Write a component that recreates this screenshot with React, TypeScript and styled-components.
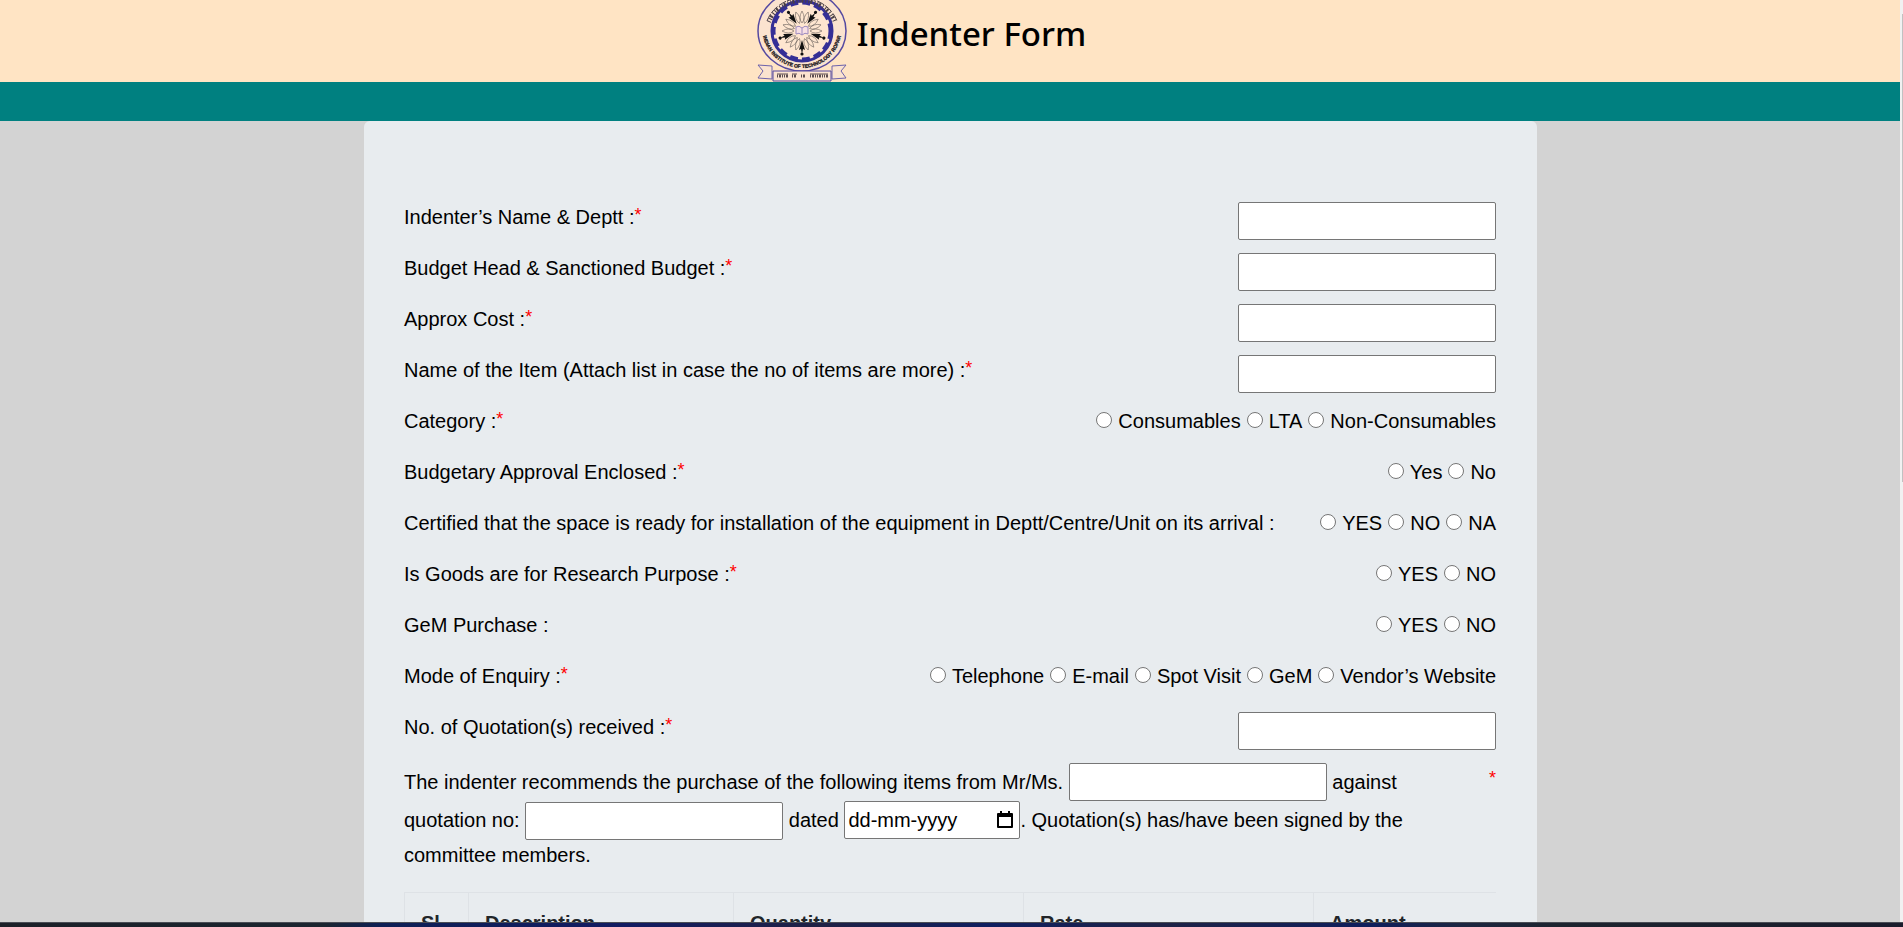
import React from 'react';
import styled, { createGlobalStyle } from 'styled-components';

const GlobalStyle = createGlobalStyle`
  *, *::before, *::after { box-sizing: border-box; }
  body { margin: 0; background: #d3d3d3; }
`;

const Screen = styled.div`
  display: flex;
  flex-direction: column;
  height: 100vh;
  overflow: hidden;
  font-family: 'Liberation Sans', Arial, sans-serif;
  font-size: 20px;
  line-height: 30px;
  color: #000;
`;

const Viewport = styled.div`
  display: flex;
  flex: 1;
  min-height: 0;
`;

const Page = styled.div`
  flex: 1;
  min-width: 0;
  overflow: hidden;
`;

const ScrollTrack = styled.div`
  width: 3px;
  padding: 14px 0 440px 2px;
  background: #f1f1f1;
`;

const ScrollThumb = styled.div`
  height: 100%;
  background: #c1c1c1;
`;

const Taskbar = styled.div`
  height: 5px;
  border-top: 1px solid #4a4d55;
  background: linear-gradient(90deg, #1c2028 0%, #1b2530 17%, #0e1f55 20%, #121b62 33%, #1f2144 43%, #0f1e60 52%, #1e2246 61%, #0f1e5c 72%, #1c2640 77%, #1d242f 82%, #1a1c2c 100%);
`;

const Header = styled.header`
  display: flex;
  justify-content: center;
  align-items: flex-end;
  gap: 10px;
  height: 82px;
  padding-right: 57px;
  background: #ffe4c4;
`;

const Title = styled.h1`
  margin: 0;
  padding-bottom: 24px;
  font-family: 'Noto Sans', sans-serif;
  font-size: 33px;
  font-weight: 500;
  line-height: 48px;
`;

const Band = styled.div`
  height: 39px;
  background: #008080;
`;

const Card = styled.main`
  margin: 0 363px 0 364px;
  padding: 81px 41px 40px 40px;
  border-radius: 6px;
  background: #e8ecef;
`;

const Row = styled.div`
  display: flex;
  justify-content: space-between;
  align-items: flex-start;
  height: 51px;
`;

const Label = styled.label`
  white-space: nowrap;
`;

const Star = styled.span`
  color: #f00;
  font-size: 18px;
  line-height: 0;
  vertical-align: 3px;
`;

const TextInput = styled.input`
  width: 258px;
  height: 38px;
  padding: 1px 3px;
  border: 1px solid #767676;
  border-radius: 2px;
  background: #fff;
  font: inherit;
`;

const Options = styled.div`
  display: flex;
  gap: 6px;
`;

const Option = styled.label`
  display: flex;
  gap: 6px;
  white-space: nowrap;
`;

const Radio = styled.input`
  appearance: none;
  width: 16px;
  height: 16px;
  margin: 6px 0 0;
  border: 1px solid #767676;
  border-radius: 50%;
  background: #fff;
  &:checked { border: 4px solid #0075ff; }
`;

const Recommendation = styled.div`
  display: flex;
  justify-content: space-between;
  margin-bottom: 22px;
`;

const Sentence = styled.p`
  flex: 0 1 1040px;
  margin: 0;
`;

const SideMark = styled.div`
  padding-top: 2px;
`;

const DateBox = styled.span`
  display: inline-flex;
  justify-content: space-between;
  align-items: center;
  width: 176px;
  height: 38px;
  padding: 0 5px 0 3px;
  border: 1px solid #767676;
  border-radius: 2px;
  background: #fff;
`;

const DateInput = styled.input`
  width: 130px;
  padding: 0;
  border: 0;
  background: none;
  font: inherit;
  &::placeholder { color: #000; opacity: 1; }
`;

const PickerButton = styled.button`
  display: flex;
  padding: 0;
  border: 0;
  background: none;
`;

const TableFrame = styled.div`
  overflow-x: auto;
`;

const Items = styled.table`
  width: 1199px;
  table-layout: fixed;
  border-collapse: collapse;
  color: #212529;
`;

const HeadCell = styled.th<{ $width: number }>`
  width: ${(p) => p.$width}px;
  padding: 15px 16px;
  border: 1px solid #dee2e6;
  text-align: left;
`;

const lampAngles = [36, 108, 180, 252, 324];
const leafAngles = [0, 18, 54, 72, 90, 126, 144, 162, 198, 216, 234, 270, 288, 306, 342];

const Emblem = () => (
  <svg width="90" height="82" viewBox="0 0 90 82" role="img" aria-label="Indian Institute of Technology Ropar emblem">
    <defs>
      <path id="motto-arc" d="M5 27A40 41 0 0 0 85 27" />
    </defs>
    <ellipse cx="45" cy="31" rx="44" ry="40" fill="#fbe3cf" stroke="#5549a0" strokeWidth="1.5" />
    <ellipse cx="45" cy="31" rx="30" ry="30" fill="#fee6d0" stroke="#352f96" strokeWidth="3" />
    <ellipse cx="45" cy="31" rx="28" ry="28" fill="none" stroke="#352f96" strokeWidth="3" strokeDasharray="8 4" />
    {/* Devanagari name round the top of the ring */}
    <path d="M10 21A37 34 0 0 1 80 21" fill="none" stroke="#4a4046" strokeWidth="1" strokeDasharray="8 1 9 2" />
    <path d="M12 22A35 32 0 0 1 78 22" fill="none" stroke="#4a4046" strokeWidth="4" strokeDasharray="1 2 1 1 2 2" />
    <text fontFamily="Liberation Sans, Arial, sans-serif" fontSize="5" fontWeight="700" fill="#1c181c" stroke="#1c181c" strokeWidth="0.3">
      <textPath href="#motto-arc" startOffset="50%" textAnchor="middle">INDIAN INSTITUTE OF TECHNOLOGY ROPAR</textPath>
    </text>
    {leafAngles.map((a) => (
      <path
        key={a}
        d="M0 -8Q-4 -13 0 -20Q4 -13 0 -8"
        fill="none"
        stroke="#6b615c"
        strokeWidth="0.6"
        transform={`translate(45 31) rotate(${a})`}
      />
    ))}
    {lampAngles.map((a) => (
      <g key={a} transform={`translate(45 31) rotate(${a})`} fill="#111">
        <path d="M0 -9L-3 -19L-1 -18L0 -23L1 -18L3 -19Z" />
        <circle cx="0" cy="-23" r="1.6" />
      </g>
    ))}
    <path d="M39 27Q42 25 45 28Q48 25 51 27V34Q48 32 45 35Q42 32 39 34ZM45 28V35" fill="#f7dfe4" stroke="#9d8bc0" strokeWidth="1" />
    <path d="M15 66L1 65L6 71L1 78L15 79ZM75 66L89 65L84 71L89 78L75 79Z" fill="#fbe3cf" stroke="#6c62ab" strokeWidth="1" />
    <path d="M16 71H74V81H16Z" fill="#fbe3cf" stroke="#5549a0" strokeWidth="1" />
    <path d="M20 74H31M35 74H40M53 74H71" stroke="#5c4d50" strokeWidth="1" />
    <path d="M20 76H31M35 76H40M44 76H49M53 76H71" stroke="#5c4d50" strokeWidth="3" strokeDasharray="1 1 2 1 1 1" />
  </svg>
);

const CalendarIcon = () => (
  <svg width="18" height="20" viewBox="0 0 18 20" aria-hidden="true">
    <path
      fillRule="evenodd"
      d="M4 1H6V3H12V1H14V3H16Q17 3 17 4V17Q17 18 16 18H2Q1 18 1 17V4Q1 3 2 3H4ZM3 7V16H15V7Z"
      fill="#000"
    />
  </svg>
);

type Field = { id: string; label: string; required?: boolean; options?: string[] };

const fields: Field[] = [
  { id: 'name', label: 'Indenter’s Name & Deptt :', required: true },
  { id: 'budget', label: 'Budget Head & Sanctioned Budget :', required: true },
  { id: 'cost', label: 'Approx Cost :', required: true },
  { id: 'item', label: 'Name of the Item (Attach list in case the no of items are more) :', required: true },
  { id: 'category', label: 'Category :', required: true, options: ['Consumables', 'LTA', 'Non-Consumables'] },
  { id: 'approval', label: 'Budgetary Approval Enclosed :', required: true, options: ['Yes', 'No'] },
  {
    id: 'space',
    label: 'Certified that the space is ready for installation of the equipment in Deptt/Centre/Unit on its arrival :',
    options: ['YES', 'NO', 'NA'],
  },
  { id: 'research', label: 'Is Goods are for Research Purpose :', required: true, options: ['YES', 'NO'] },
  { id: 'gem', label: 'GeM Purchase :', options: ['YES', 'NO'] },
  {
    id: 'enquiry',
    label: 'Mode of Enquiry :',
    required: true,
    options: ['Telephone', 'E-mail', 'Spot Visit', 'GeM', 'Vendor’s Website'],
  },
  { id: 'quotations', label: 'No. of Quotation(s) received :', required: true },
];

const columns = [
  { name: 'Sl', width: 64 },
  { name: 'Description', width: 265 },
  { name: 'Quantity', width: 290 },
  { name: 'Rate', width: 290 },
  { name: 'Amount', width: 290 },
];

const FieldRow = ({ id, label, required, options }: Field) => (
  <Row>
    <Label as={options ? 'span' : 'label'} id={`${id}-label`} htmlFor={options ? undefined : id}>
      {label}
      {required && <Star>*</Star>}
    </Label>
    {options ? (
      <Options role="radiogroup" aria-labelledby={`${id}-label`}>
        {options.map((option) => (
          <Option key={option}>
            <Radio type="radio" name={id} value={option} />
            {option}
          </Option>
        ))}
      </Options>
    ) : (
      <TextInput id={id} type="text" />
    )}
  </Row>
);

export default function App() {
  return (
    <Screen>
      <GlobalStyle />
      <Viewport>
        <Page>
          <Header>
            <Emblem />
            <Title>Indenter Form</Title>
          </Header>
          <Band />
          <Card>
            {fields.map((field) => (
              <FieldRow key={field.id} {...field} />
            ))}
            <Recommendation>
              <Sentence>
                The indenter recommends the purchase of the following items from Mr/Ms.{' '}
                <TextInput type="text" aria-label="Vendor name" /> against quotation no:{' '}
                <TextInput type="text" aria-label="Quotation number" /> dated{' '}
                <DateBox>
                  <DateInput type="text" aria-label="Quotation date" placeholder="dd-mm-yyyy" />
                  <PickerButton type="button" aria-label="Open calendar">
                    <CalendarIcon />
                  </PickerButton>
                </DateBox>
                . Quotation(s) has/have been signed by the committee members.
              </Sentence>
              <SideMark>
                <Star>*</Star>
              </SideMark>
            </Recommendation>
            <TableFrame>
              <Items>
                <thead>
                  <tr>
                    {columns.map((column) => (
                      <HeadCell key={column.name} $width={column.width}>
                        {column.name}
                      </HeadCell>
                    ))}
                  </tr>
                </thead>
              </Items>
            </TableFrame>
          </Card>
        </Page>
        <ScrollTrack>
          <ScrollThumb />
        </ScrollTrack>
      </Viewport>
      <Taskbar />
    </Screen>
  );
}
